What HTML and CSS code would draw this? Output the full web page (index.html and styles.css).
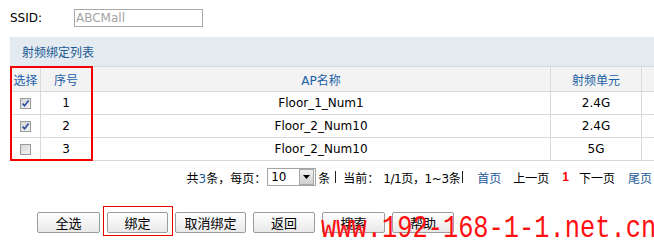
FILE: index.html
```html
<!DOCTYPE html>
<html lang="zh-CN">
<head>
<meta charset="utf-8">
<title>射频绑定列表</title>
<link rel="stylesheet" href="styles.css">
</head>
<body>
<div class="page">
  <div class="ssid-row">
    <span class="ssid-label">SSID:</span>
    <span class="ssid-input">ABCMall</span>
  </div>
  <div class="panel-title">射频绑定列表</div>
  <div class="table-wrap">
    <table class="grid">
      <colgroup>
        <col class="c-sel"><col class="c-no"><col class="c-name"><col class="c-band"><col class="c-rest">
      </colgroup>
      <thead>
        <tr><th>选择</th><th>序号</th><th>AP名称</th><th>射频单元</th><th></th></tr>
      </thead>
      <tbody>
        <tr>
          <td><span class="cb"><svg viewBox="0 0 9 9" width="9" height="9"><path d="M1.6 4.6 L3.6 6.8 L7.6 1.6" fill="none" stroke="#2f4fa6" stroke-width="1.7"/></svg></span></td>
          <td>1</td><td>Floor_1_Num1</td><td>2.4G</td><td></td>
        </tr>
        <tr>
          <td><span class="cb"><svg viewBox="0 0 9 9" width="9" height="9"><path d="M1.6 4.6 L3.6 6.8 L7.6 1.6" fill="none" stroke="#2f4fa6" stroke-width="1.7"/></svg></span></td>
          <td>2</td><td>Floor_2_Num10</td><td>2.4G</td><td></td>
        </tr>
        <tr>
          <td><span class="cb"></span></td>
          <td>3</td><td>Floor_2_Num10</td><td>5G</td><td></td>
        </tr>
      </tbody>
    </table>
    <div class="mark-cols"></div>
  </div>
  <div class="pager">
    <span>共<span class="blue">3</span>条，每页：</span>
    <span class="select"><span class="select-val">10</span><span class="select-btn"><svg viewBox="0 0 7 4" width="7" height="4"><path d="M0 0 H7 L3.5 4 Z" fill="#000"/></svg></span></span>
    <span class="after-select">条</span>
    <span class="sep s1"></span>
    <span class="cur">当前：</span>
    <span class="range">1/1页，1~3条</span>
    <span class="sep s2"></span>
    <span class="blue first">首页</span>
    <span class="prev">上一页</span>
    <span class="page-no">1</span>
    <span class="next">下一页</span>
    <span class="blue last">尾页</span>
  </div>
  <div class="actions">
    <button class="btn w63">全选</button>
    <button class="btn w61 marked">绑定</button>
    <button class="btn w71">取消绑定</button>
    <button class="btn w62">返回</button>
    <button class="btn w63">搜索</button>
    <button class="btn w62">帮助</button>
  </div>
  <div class="watermark">www.192-168-1-1.net.cn</div>
</div>
</body>
</html>
```
FILE: styles.css
```css
html, body {
  margin: 0;
  padding: 0;
  overflow: hidden;
  background: #fff;
}
body {
  font-family: "DejaVu Sans", "Noto Sans CJK SC", sans-serif;
  font-size: 12px;
  color: #000;
}
.page {
  position: relative;
  width: 654px;
  height: 244px;
  box-sizing: border-box;
  padding: 9px 0 0 10px;
}
.ssid-row {
  display: flex;
  align-items: center;
  height: 18px;
}
.ssid-label {
  width: 64px;
}
.ssid-input {
  width: 129px;
  height: 18px;
  box-sizing: border-box;
  border: 1px solid #a9a9a9;
  color: #a3a3a3;
  padding-left: 1px;
  line-height: 16px;
}
.panel-title {
  margin-top: 10px;
  width: 660px;
  height: 29px;
  line-height: 29px;
  padding-left: 12px;
  box-sizing: border-box;
  background: #e3ebf1;
  color: #1c5a93;
  font-family: "Noto Sans CJK SC", sans-serif;
}
.table-wrap {
  position: relative;
  width: 660px;
}
.grid {
  border-collapse: collapse;
  table-layout: fixed;
  width: 661px;
}
.c-sel { width: 30px; }
.c-no { width: 51px; }
.c-name { width: 459px; }
.c-band { width: 91px; }
.c-rest { width: 30px; }
.grid th, .grid td {
  border: 1px solid #d9d9d9;
  padding: 0;
  text-align: center;
  vertical-align: middle;
}
.grid th {
  height: 24px;
  background: #f3f3f3;
  color: #1b5fa5;
  font-weight: normal;
}
.grid td {
  height: 22px;
}
.cb {
  display: inline-flex;
  align-items: center;
  justify-content: center;
  width: 11px;
  height: 11px;
  box-sizing: border-box;
  border: 1px solid #9a9a9a;
  background: linear-gradient(135deg, #d6d6d6, #f4f4f4);
  vertical-align: middle;
}
.cb svg { display: block; }
.mark-cols {
  position: absolute;
  left: 0;
  top: 0;
  width: 83px;
  height: 95px;
  box-sizing: border-box;
  border: 2px solid #f20000;
}
.pager {
  display: flex;
  align-items: center;
  justify-content: flex-end;
  width: 644px;
  height: 18px;
  margin-top: 7px;
  padding-right: 2px;
  box-sizing: border-box;
  white-space: nowrap;
}
.blue { color: #1c5a98; }
.select {
  display: flex;
  margin-left: 1px;
  width: 49px;
  height: 18px;
  box-sizing: border-box;
  border: 1px solid #a5a5a5;
  background: #fff;
}
.select-val {
  flex: 1;
  padding-left: 3px;
  line-height: 16px;
}
.select-btn {
  display: flex;
  align-items: center;
  justify-content: center;
  width: 15px;
  margin: 0 1px 0 0;
  box-sizing: border-box;
  border: 1px solid #a8a8a8;
  background: linear-gradient(#f2f2f2, #cfcfcf);
}
.after-select { margin-left: 2px; }
.sep {
  display: inline-block;
  width: 1px;
  height: 12px;
  background: #222;
}
.s1 { margin-left: 5px; }
.cur { margin-left: 7px; }
.range {
  margin-left: 4px;
  letter-spacing: -0.4px;
}
.s2 { margin-left: 2px; }
.first { margin-left: 14px; }
.prev { margin-left: 12px; }
.page-no {
  margin-left: 13px;
  color: #f00;
  font-weight: bold;
  font-family: "Liberation Sans", sans-serif;
}
.next { margin-left: 10px; }
.last { margin-left: 13px; }
.actions {
  display: flex;
  gap: 7px;
  margin-top: 26px;
  padding-left: 27px;
}
.btn {
  position: relative;
  height: 21px;
  padding: 0;
  box-sizing: border-box;
  border: 1px solid #9c9c9c;
  border-radius: 2px;
  background: linear-gradient(#ffffff, #e9e9e9);
  font-family: "Noto Sans CJK SC", sans-serif;
  font-size: 13px;
  line-height: 19px;
  color: #000;
}
.w61 { width: 61px; }
.w62 { width: 62px; }
.w63 { width: 63px; }
.w71 { width: 71px; }
.marked::after {
  content: "";
  position: absolute;
  left: -5px;
  right: -6px;
  top: -7px;
  bottom: -4px;
  border: 1.5px solid #e60000;
}
.watermark {
  position: absolute;
  left: 321px;
  top: 217.5px;
  font-family: "Liberation Mono", monospace;
  font-size: 25.4px;
  line-height: 25.4px;
  color: #ff1010;
  white-space: nowrap;
  transform-origin: 0 19.5px;
  transform: scaleY(1.2);
}
```
